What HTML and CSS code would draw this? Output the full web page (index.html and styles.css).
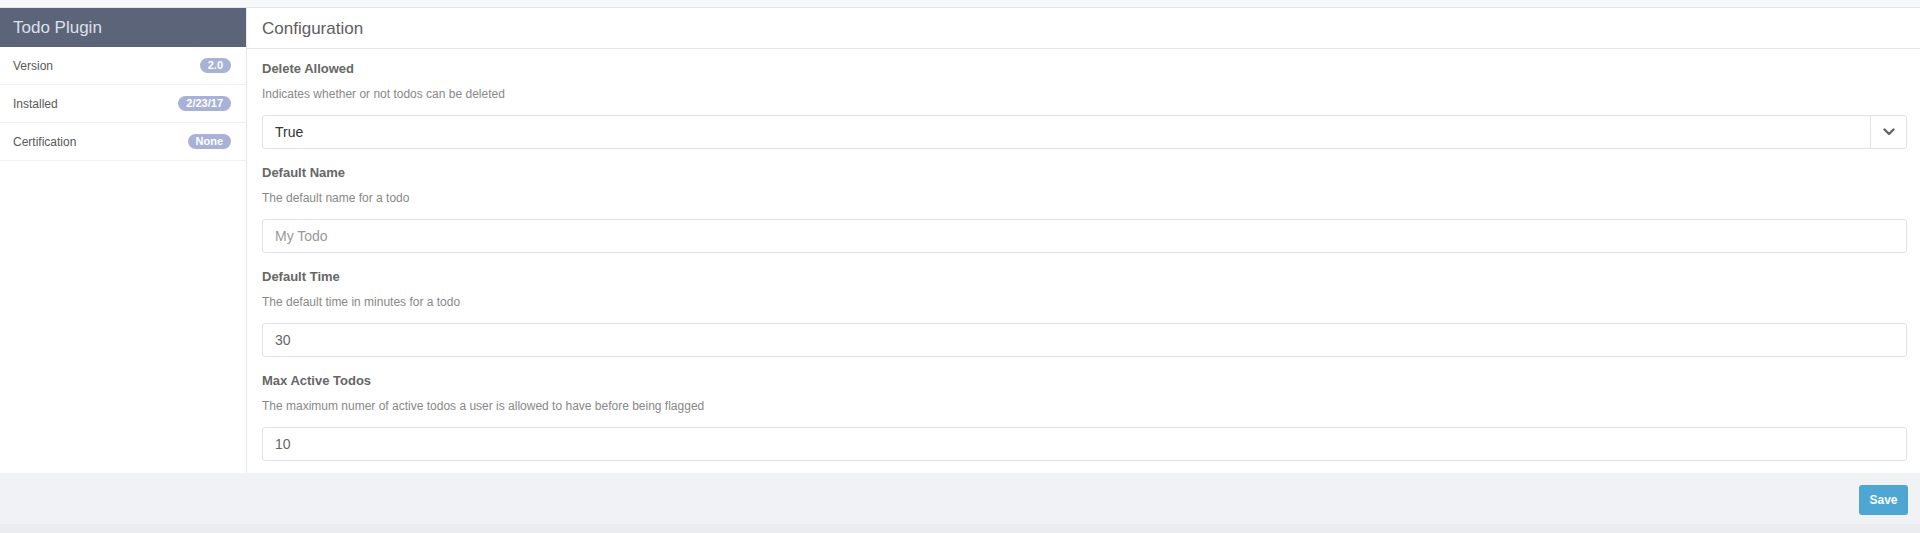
FILE: index.html
```html
<!DOCTYPE html>
<html>
<head>
<meta charset="utf-8">
<link rel="stylesheet" href="styles.css">
</head>
<body>
<div class="topbar"></div>
<div class="main">
  <aside class="sidebar">
    <div class="side-head">Todo Plugin</div>
    <div class="side-row"><span>Version</span><span class="badge">2.0</span></div>
    <div class="side-row"><span>Installed</span><span class="badge">2/23/17</span></div>
    <div class="side-row"><span>Certification</span><span class="badge">None</span></div>
  </aside>
  <section class="content">
    <div class="content-head">Configuration</div>
    <div class="form">
      <div class="group">
        <div class="label">Delete Allowed</div>
        <div class="desc">Indicates whether or not todos can be deleted</div>
        <div class="select">
          <div class="select-value">True</div>
          <div class="select-arrow">
            <svg width="12" height="8" viewBox="0 0 12 8"><path d="M1.5 1.5 L6 6 L10.5 1.5" fill="none" stroke="#666" stroke-width="2.4" stroke-linecap="round" stroke-linejoin="round"/></svg>
          </div>
        </div>
      </div>
      <div class="group">
        <div class="label">Default Name</div>
        <div class="desc">The default name for a todo</div>
        <div class="input placeholder">My Todo</div>
      </div>
      <div class="group">
        <div class="label">Default Time</div>
        <div class="desc">The default time in minutes for a todo</div>
        <div class="input">30</div>
      </div>
      <div class="group">
        <div class="label">Max Active Todos</div>
        <div class="desc">The maximum numer of active todos a user is allowed to have before being flagged</div>
        <div class="input">10</div>
      </div>
    </div>
  </section>
</div>
<div class="footer">
  <button class="save">Save</button>
</div>
</body>
</html>
```
FILE: styles.css
```css
* { box-sizing: border-box; }
html, body { margin: 0; padding: 0; }
body {
  background: #eaecf0;
  font-family: "Liberation Sans", Arial, Helvetica, sans-serif;
  color: #555;
  height: 533px;
}
.topbar {
  height: 8px;
  background: #f6f7f9;
  border-bottom: 1px solid #e2e5eb;
}
.main {
  display: flex;
  background: #fff;
}
.sidebar {
  width: 247px;
  flex: none;
  border-right: 1px solid #e3e6ed;
}
.side-head {
  height: 39px;
  line-height: 40px;
  background: #5c6479;
  color: #dde0e8;
  font-size: 17px;
  font-weight: 300;
  padding-left: 13px;
}
.side-row {
  height: 38px;
  border-bottom: 1px solid #eef0f4;
  display: flex;
  align-items: center;
  justify-content: space-between;
  padding: 0 15px 0 13px;
  font-size: 12px;
  color: #595959;
}
.badge {
  background: #a8b2d7;
  color: #fff;
  font-weight: bold;
  font-size: 11px;
  line-height: 15px;
  height: 15px;
  padding: 0 8px;
  border-radius: 8px;
}
.content {
  flex: 1;
  min-width: 0;
}
.content-head {
  height: 41px;
  line-height: 41px;
  border-bottom: 1px solid #e3e6ed;
  font-size: 17px;
  font-weight: 300;
  color: #5e5e5e;
  padding-left: 15px;
}
.form {
  padding: 12px 13px 12px 15px;
  display: flex;
  flex-direction: column;
  gap: 16px;
}
.label {
  font-size: 13px;
  line-height: 16px;
  font-weight: bold;
  color: #666;
}
.desc {
  font-size: 12px;
  line-height: 16px;
  color: #888;
  margin-top: 9px;
  margin-bottom: 13px;
}
.select, .input {
  height: 34px;
  border: 1px solid #dfe2ea;
  border-radius: 3px;
  font-size: 14px;
}
.select {
  display: flex;
}
.select-value {
  flex: 1;
  line-height: 32px;
  padding-left: 12px;
  color: #333;
}
.select-arrow {
  width: 36px;
  border-left: 1px solid #dfe2ea;
  display: flex;
  align-items: center;
  justify-content: center;
}
.input {
  line-height: 32px;
  padding-left: 12px;
  color: #666;
}
.input.placeholder {
  color: #999;
}
.footer {
  height: 51px;
  background: #f1f2f6;
  display: flex;
  justify-content: flex-end;
  align-items: flex-start;
  padding: 12px 12px 0 0;
}
.save {
  width: 49px;
  height: 30px;
  background: #4ea6d3;
  border: none;
  border-radius: 3px;
  color: #fff;
  font-family: "Liberation Sans", Arial, sans-serif;
  font-weight: bold;
  font-size: 12px;
  padding: 0;
}
```
